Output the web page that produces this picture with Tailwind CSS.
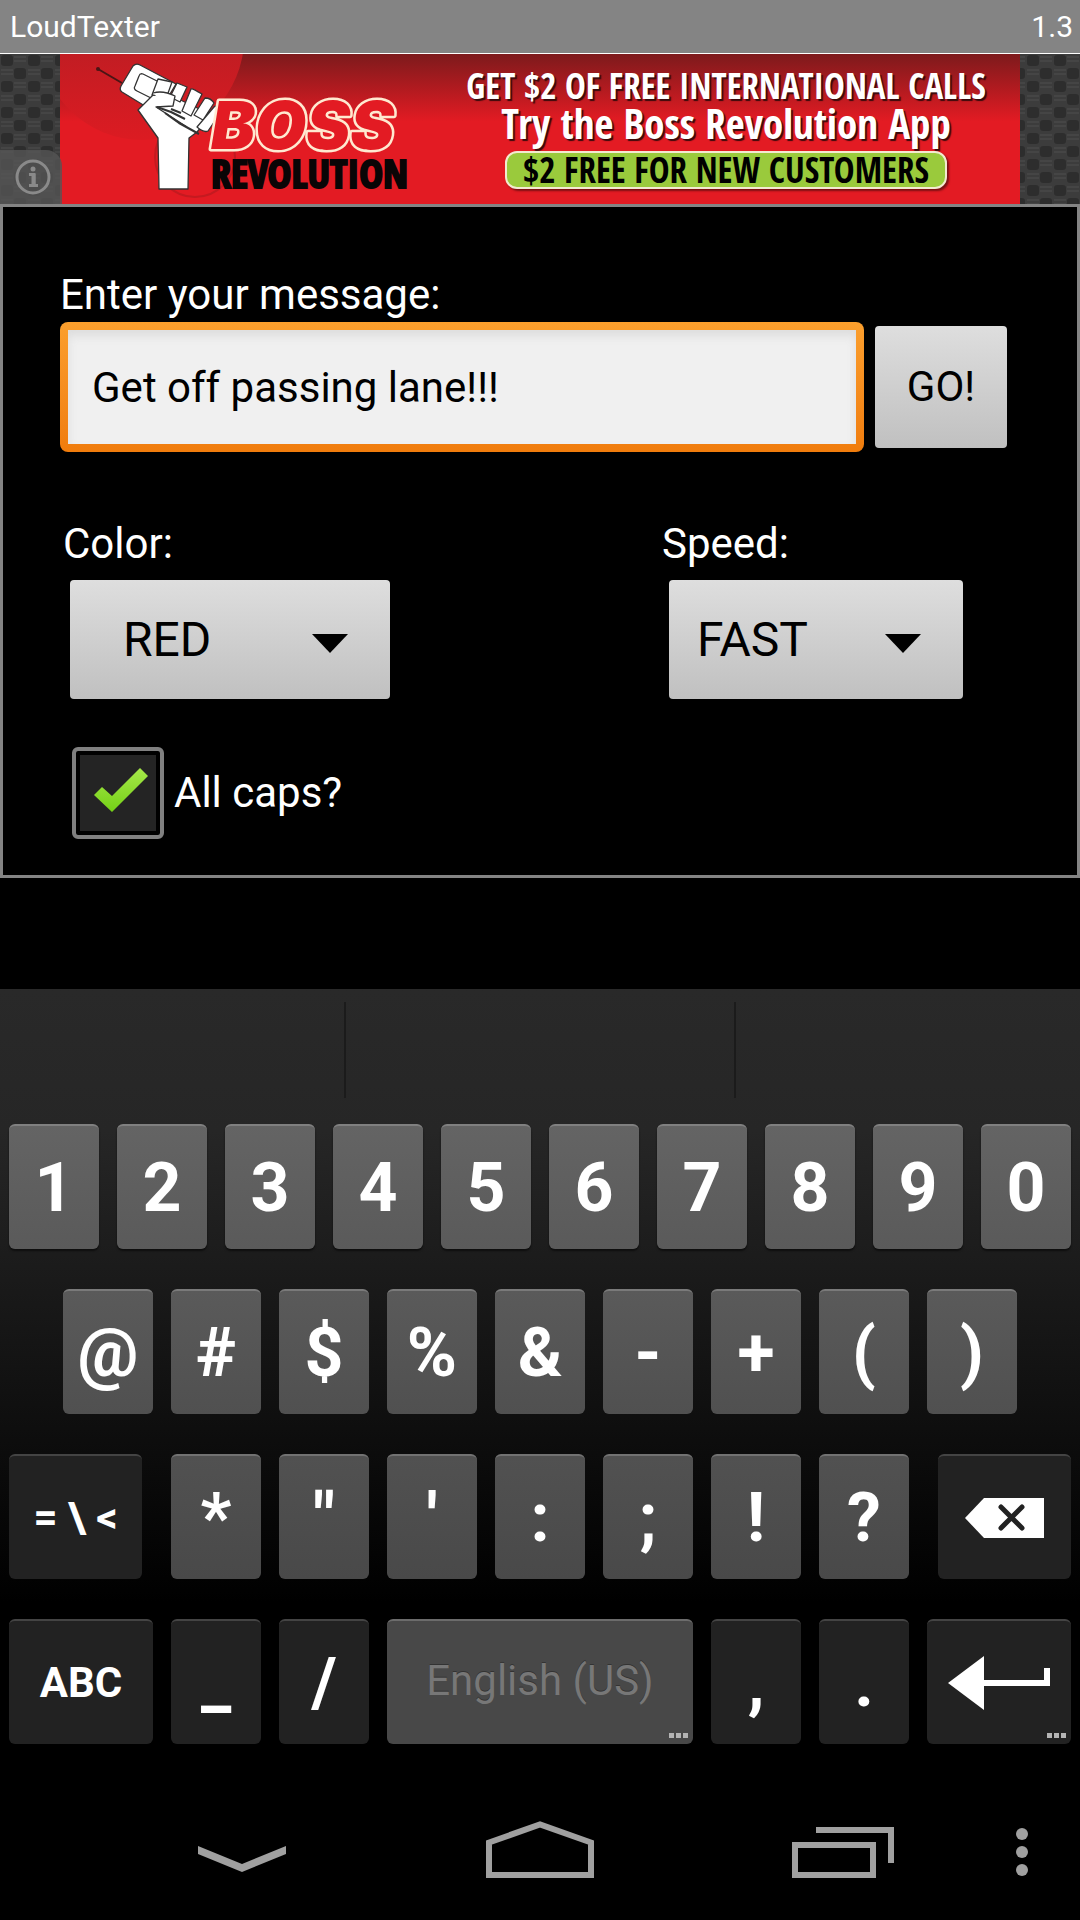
<!DOCTYPE html>
<html lang="en">
<head>
    <meta charset="UTF-8" />
    <meta name="viewport" content="width=device-width, initial-scale=1.0"/>
    <title>LoudTexter</title>
    <script src="https://cdn.jsdelivr.net/npm/@tailwindcss/browser@4"></script>
</head>

<body class="flex min-h-screen flex-col bg-black font-['Roboto',sans-serif] text-[42px] leading-[50px] text-white">

    <!-- Title bar -->
    <header class="flex h-[54px] items-center justify-between border-b border-white bg-[#848484] pr-[7px] pl-[10px] text-[30px] leading-[54px]">
        <h1>LoudTexter</h1>
        <span>1.3</span>
    </header>

    <!-- Ad banner -->
    <aside class="relative flex h-[150px] justify-center overflow-hidden bg-[#333]">
        <svg class="absolute inset-0 h-full w-full" aria-hidden="true">
            <defs>
                <pattern id="carbon" width="27" height="26" patternUnits="userSpaceOnUse">
                    <rect width="27" height="26" fill="#3c3c3c"/>
                    <rect x="1" y="1" width="12" height="11" rx="3" fill="#2d2d2d"/>
                    <rect x="14" y="14" width="12" height="11" rx="3" fill="#2d2d2d"/>
                    <path d="M14 3h12M14 7h12M1 16h12M1 20h12" stroke="#484848" stroke-width="1.5"/>
                </pattern>
            </defs>
            <rect width="100%" height="100%" fill="url(#carbon)"/>
        </svg>

        <a href="#" class="relative flex w-[960px] bg-linear-to-b/srgb from-[#7d1a1c] via-[#e31b23] via-45% to-[#e31b23]">
            <svg class="h-[150px] w-[380px] shrink-0" viewBox="0 0 380 150" role="img" aria-label="Boss Revolution">
                <defs>
                    <linearGradient id="disc" x1="0" y1="0" x2="0" y2="1">
                        <stop offset="0.5" stop-color="#bd1d23"/>
                        <stop offset="1" stop-color="#dc1b22"/>
                    </linearGradient>
                </defs>
                <circle cx="82" cy="-16" r="102" fill="url(#disc)"/>
                <circle cx="135" cy="103" r="40" fill="none" stroke="#c41a20" stroke-width="2"/>
                <!-- phone -->
                <path d="M38 15l24 14" stroke="#4a1515" stroke-width="2"/>
                <circle cx="38" cy="15" r="2" fill="#4a1515"/>
                <g stroke="#333" stroke-width="1.3" stroke-linejoin="round" fill="#fff">
                    <path d="M73 12q3-3 7-1l36 19-18 30-36-22q-3-2-1-6z"/>
                    <path d="M83 20l22 11-10 15-18-9q-4-2-2-5l4-10q1-3 4-2z"/>
                    <!-- arm and back of the hand -->
                    <path d="M95 39l17 3 38 18-1 4-12 14-8 6-1 51H99l-1-51-20-28z" />
                    <!-- fingers -->
                    <path d="M98 25l14 3-5 14-15-1zM117 29l10 4-7 15-10-5zM131 35q1-1 11 5l-11 22-9-5zM145 44q6 0 9 5l-11 17-9-5zM154 53q3-3 9 2l-15 22q-4 2-11-4z"/>
                    <path d="M93 39q10-3 22 3l-2 10-17 1 14 9 17 11" />
                    <path d="M97 53l14 5 14 7M105 59l14 10 20 11M111 55l10 4" fill="none" stroke-width="2"/>
                </g>
                <text x="151" y="95" font-family="Inter, sans-serif" font-weight="900" font-style="italic" font-size="66" fill="#e31b23" stroke="#ffe9d0" stroke-width="5" stroke-linejoin="round" paint-order="stroke">BOSS</text>
                <text x="151" y="134" font-family="'Open Sans Condensed', 'Roboto Condensed', sans-serif" font-weight="700" font-size="40" fill="#0a0506" stroke="#0a0506" stroke-width="2">REVOLUTION</text>
            </svg>
            <span class="flex flex-1 flex-col items-center pr-2 font-['Open_Sans_Condensed','Roboto_Condensed',sans-serif] font-bold whitespace-nowrap">
                <span class="mt-[13px] text-[35px] leading-[38px] [text-shadow:2px_2px_1px_#3a0a0c]">GET $2 OF FREE INTERNATIONAL CALLS</span>
                <span class="text-[41px] leading-[36px] [text-shadow:2px_2px_1px_#3a0a0c]">Try the Boss Revolution App</span>
                <span class="mt-[10px] h-[38px] rounded-xl border-2 border-[#f3ead0] bg-[#9aca3c] px-4 text-[35px] leading-[34px] text-black shadow-[2px_2px_2px_#7a1013]">$2 FREE FOR NEW CUSTOMERS</span>
            </span>
        </a>

        <button type="button" aria-label="Ad info" class="absolute bottom-0 left-0 flex h-[54px] w-[62px] items-center justify-center rounded-tr-2xl bg-[#555]/80 pl-1">
            <svg class="h-9 w-9" viewBox="0 0 36 36" fill="none" stroke="#8a8a8a">
                <circle cx="18" cy="18" r="16" stroke-width="3"/>
                <circle cx="18" cy="10" r="2.5" fill="#8a8a8a" stroke="none"/>
                <path d="M14 15.500h5V26M14 26.500h9" stroke-width="3"/>
                <path d="M18.500 15v11" stroke-width="4"/>
            </svg>
        </button>
    </aside>

    <!-- Message form -->
    <form class="border-[3px] border-[#848484] pt-[63px] pb-9">
        <label for="message" class="ml-[57px] block">Enter your message:</label>
        <div class="mt-0.5 mr-[70px] ml-[57px] flex items-center gap-[11px]">
            <div class="flex-1 rounded-lg bg-linear-to-b from-[#fb9f2d] to-[#f07c0c] p-2">
                <input id="message" type="text" value="Get off passing lane!!!" class="block h-[114px] w-full bg-[#f0f0f0] px-6 text-black shadow-[inset_0_6px_10px_#ddd] outline-none"/>
            </div>
            <button type="button" class="h-[122px] w-[132px] rounded-sm bg-linear-to-b from-[#dedede] to-[#c0c0c0] text-black">GO!</button>
        </div>

        <div class="mt-[67px] flex justify-between pr-[114px] pl-[60px]">
            <div class="w-[327px]">
                <label for="color" class="block">Color:</label>
                <div class="relative mt-[11px] ml-[7px]">
                    <select id="color" class="h-[119px] w-full appearance-none rounded-sm bg-linear-to-b from-[#dedede] to-[#c0c0c0] pl-[53px] text-[48px] text-black">
                        <option>RED</option>
                        <option>GREEN</option>
                        <option>BLUE</option>
                    </select>
                    <svg class="pointer-events-none absolute top-[54px] right-[42px] h-[19px] w-9" viewBox="0 0 36 19"><path d="M0 0h36L18 19z"/></svg>
                </div>
            </div>
            <div class="w-[301px]">
                <label for="speed" class="block">Speed:</label>
                <div class="relative mt-[11px] ml-[7px]">
                    <select id="speed" class="h-[119px] w-full appearance-none rounded-sm bg-linear-to-b from-[#dedede] to-[#c0c0c0] pl-[28px] text-[48px] text-black">
                        <option>FAST</option>
                        <option>SLOW</option>
                    </select>
                    <svg class="pointer-events-none absolute top-[54px] right-[42px] h-[19px] w-9" viewBox="0 0 36 19"><path d="M0 0h36L18 19z"/></svg>
                </div>
            </div>
        </div>

        <div class="mt-12 ml-[69px] flex items-center gap-[10px]">
            <div class="relative h-[92px] w-[92px]">
                <input id="caps" type="checkbox" checked class="peer block h-full w-full appearance-none rounded-md border-4 border-[#808080] bg-[#242424] shadow-[inset_0_0_0_4px_#000]"/>
                <svg class="pointer-events-none absolute inset-0 hidden h-full w-full peer-checked:block" viewBox="0 0 92 92">
                    <defs>
                        <linearGradient id="tick" x1="0" y1="0" x2="0" y2="1">
                            <stop offset="0" stop-color="#a6e84a"/>
                            <stop offset="1" stop-color="#74d016"/>
                        </linearGradient>
                    </defs>
                    <path d="M22 48l8-8 10 9 28-28 8 8-36 36z" fill="url(#tick)"/>
                </svg>
            </div>
            <label for="caps">All caps?</label>
        </div>
    </form>

    <!-- Keyboard -->
    <section class="mt-auto flex flex-col gap-10 bg-linear-to-b/srgb from-[#292929] via-[#262626] via-18% to-black to-78% pb-8 text-[68px] font-bold">
        <div class="-mb-10 flex h-[135px] justify-center gap-[388px] pt-[13px]">
            <span class="h-24 w-0.5 bg-[#1b1b1b]"></span>
            <span class="h-24 w-0.5 bg-[#1b1b1b]"></span>
        </div>

        <div class="grid h-[125px] grid-cols-20 *:col-span-2 *:mx-[9px] *:rounded-md *:border-t-2 *:border-[#808080] *:bg-linear-to-b *:from-[#646464] *:to-[#5a5a5a] *:shadow-[0_2px_2px_#0008]">
            <button type="button">1</button>
            <button type="button">2</button>
            <button type="button">3</button>
            <button type="button">4</button>
            <button type="button">5</button>
            <button type="button">6</button>
            <button type="button">7</button>
            <button type="button">8</button>
            <button type="button">9</button>
            <button type="button">0</button>
        </div>

        <div class="grid h-[125px] grid-cols-20 *:col-span-2 *:mx-[9px] *:rounded-md *:border-t-2 *:border-[#7a7a7a] *:bg-linear-to-b *:from-[#5a5a5a] *:to-[#505050]">
            <span class="invisible col-span-1!"></span>
            <button type="button">@</button>
            <button type="button">#</button>
            <button type="button">$</button>
            <button type="button">%</button>
            <button type="button">&amp;</button>
            <button type="button">-</button>
            <button type="button">+</button>
            <button type="button">(</button>
            <button type="button">)</button>
        </div>

        <div class="grid h-[125px] grid-cols-20">
            <button type="button" class="col-span-3 mr-5 ml-[9px] rounded-md border-t-2 border-[#444] bg-[#222] text-[42px]">= \ &lt;</button>
            <div class="col-span-14 grid grid-cols-7 *:mx-[9px] *:rounded-md *:border-t-2 *:border-[#727272] *:bg-linear-to-b *:from-[#515151] *:to-[#494949]">
                <button type="button">*</button>
                <button type="button">"</button>
                <button type="button">'</button>
                <button type="button">:</button>
                <button type="button">;</button>
                <button type="button">!</button>
                <button type="button">?</button>
            </div>
            <button type="button" aria-label="Backspace" class="col-span-3 mr-[9px] ml-5 flex items-center justify-center rounded-md border-t-2 border-[#444] bg-[#222]">
                <svg class="h-10 w-20" viewBox="0 0 80 40">
                    <path d="M0 20L19 0h60v40H19z" fill="#fff"/>
                    <path d="M36 9l21 21M57 9L36 30" stroke="#222" stroke-width="5" stroke-linecap="round"/>
                </svg>
            </button>
        </div>

        <div class="grid h-[125px] grid-cols-20 *:mx-[9px] *:rounded-md *:border-t-2 *:border-[#444] *:bg-[#222]">
            <button type="button" class="col-span-3 text-[42px]">ABC</button>
            <button type="button" class="col-span-2">_</button>
            <button type="button" class="col-span-2">/</button>
            <button type="button" class="relative col-span-6 border-[#6c6c6c]! bg-[#484848]! pb-1 text-[42px] font-normal text-[#777] [text-shadow:0_-1px_0_#333]">
                English (US)
                <svg class="absolute right-[5px] bottom-[6px] h-[5px] w-[19px]" viewBox="0 0 19 5"><path d="M0 0h5v5H0zM7 0h5v5H7zM14 0h5v5h-5z" fill="#b4b4b4"/></svg>
            </button>
            <button type="button" class="col-span-2">,</button>
            <button type="button" class="col-span-2">.</button>
            <button type="button" aria-label="Enter" class="relative col-span-3 flex items-center justify-center">
                <svg class="h-[54px] w-[102px]" viewBox="0 0 102 54" fill="#fff">
                    <path d="M0 27L36 0v24h60V12h6v18H36v24z"/>
                </svg>
                <svg class="absolute right-[5px] bottom-[6px] h-[5px] w-[19px]" viewBox="0 0 19 5"><path d="M0 0h5v5H0zM7 0h5v5H7zM14 0h5v5h-5z" fill="#b4b4b4"/></svg>
            </button>
        </div>
    </section>

    <!-- System navigation -->
    <nav class="grid h-36 grid-cols-[93fr_298fr_298fr_298fr_93fr] items-center justify-items-center">
        <span></span>
        <button type="button" aria-label="Hide keyboard">
            <svg class="h-[60px] w-[88px]" viewBox="0 0 88 60"><path d="M0 28l44 18 44-18v8L44 54 0 36z" fill="#a0a0a0"/></svg>
        </button>
        <button type="button" aria-label="Home">
            <svg class="h-[60px] w-[108px]" viewBox="0 0 108 60" fill="none" stroke="#a0a0a0" stroke-width="6"><path d="M3 57V24.500L54 6.500l51 18V57z"/></svg>
        </button>
        <button type="button" aria-label="Recent apps">
            <svg class="h-[60px] w-[112px]" viewBox="0 0 112 60" fill="none" stroke="#a0a0a0" stroke-width="6">
                <path d="M13 27h78v30H13zM34 12h75v33"/>
            </svg>
        </button>
        <button type="button" aria-label="More options">
            <svg class="h-[60px] w-[36px]" viewBox="0 0 36 60" fill="#a0a0a0"><circle cx="6" cy="16" r="6"/><circle cx="6" cy="34" r="6"/><circle cx="6" cy="52" r="6"/></svg>
        </button>
    </nav>

</body>
</html>
